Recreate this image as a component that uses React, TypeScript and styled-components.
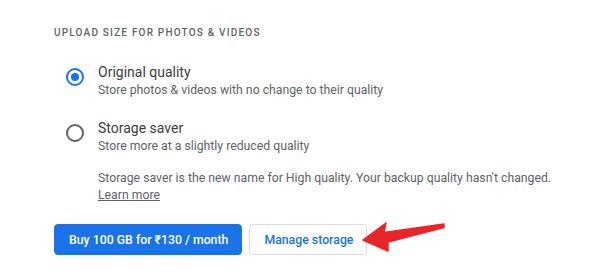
import React, { useState } from 'react';
import styled, { createGlobalStyle } from 'styled-components';

const GlobalStyle = createGlobalStyle`
  body {
    margin: 0;
    background: #ffffff;
    font-family: Roboto, "Liberation Sans", Arial, sans-serif;
  }
`

const Page = styled.div`
  padding: 25px 0 0 54px;
  width: 600px;
  height: 275px;
  box-sizing: border-box;
`
const Heading = styled.div`
  font-size: 10px;
  line-height: 16px;
  font-weight: 500;
  letter-spacing: 1.2px;
  color: #5f6368;
  text-transform: uppercase;
`
const Options = styled.div`
  display: flex;
  flex-direction: column;
  gap: 20px;
  margin-top: 21px;
  padding-left: 12px;
`
const Option = styled.label`
  display: flex;
  gap: 14px;
  cursor: pointer;
`
const Radio = styled.span<{ checked: boolean }>`
  flex: none;
  width: 18px;
  height: 18px;
  margin-top: 6px;
  box-sizing: border-box;
  border-radius: 50%;
  border: 2px solid ${p => (p.checked ? '#1a73e8' : '#5f6368')};
  display: flex;
  align-items: center;
  justify-content: center;
  &::after {
    content: '';
    width: 8px;
    height: 8px;
    border-radius: 50%;
    background: ${p => (p.checked ? '#1a73e8' : 'transparent')};
  }
`
const OptionText = styled.div`
  display: flex;
  flex-direction: column;
`
const Title = styled.div`
  font-size: 14px;
  line-height: 20px;
  color: #3c4043;
`
const Sub = styled.div`
  font-size: 12.25px;
  line-height: 16px;
  color: #5f6368;
`
const Note = styled.div`
  margin: 16px 0 0 44px;
  font-size: 12.25px;
  line-height: 17px;
  color: #5f6368;
`
const LearnMore = styled.a`
  color: #5f6368;
  text-decoration: underline;
`
const ButtonRow = styled.div`
  position: relative;
  display: flex;
  gap: 7px;
  margin-top: 20px;
`
const Button = styled.button<{ primary?: boolean }>`
  height: 31px;
  padding: 0 13px 0 14px;
  box-sizing: border-box;
  border-radius: 4px;
  font-family: Roboto, "Liberation Sans", "DejaVu Sans", sans-serif;
  font-size: 12.3px;
  font-weight: 500;
  cursor: pointer;
  background: ${p => (p.primary ? '#1a73e8' : '#ffffff')};
  color: ${p => (p.primary ? '#ffffff' : '#1a73e8')};
  border: 1px solid ${p => (p.primary ? '#1a73e8' : '#dadce0')};
`
const Arrow = styled.svg`
  position: absolute;
  left: 301px;
  top: -5px;
`

const options = [
  { title: 'Original quality', sub: 'Store photos & videos with no change to their quality' },
  { title: 'Storage saver', sub: 'Store more at a slightly reduced quality' },
]

const App = () => {
  const [selected, setSelected] = useState(0)
  return (
    <Page>
      <GlobalStyle />
      <Heading>Upload size for photos &amp; videos</Heading>
      <Options>
        {options.map((o, i) => (
          <Option key={o.title} onClick={() => setSelected(i)}>
            <Radio checked={selected === i} />
            <OptionText>
              <Title>{o.title}</Title>
              <Sub>{o.sub}</Sub>
            </OptionText>
          </Option>
        ))}
      </Options>
      <Note>
        Storage saver is the new name for High quality. Your backup quality hasn't changed.
        <br />
        <LearnMore href="#">Learn more</LearnMore>
      </Note>
      <ButtonRow>
        <Button primary>Buy 100 GB for ₹130 / month</Button>
        <Button>Manage storage</Button>
        <Arrow width="95" height="35" viewBox="0 0 95 35">
          <polygon
            points="8,21 31,4 29,13.5 89,5 89,8.5 33,23 33,32"
            fill="#e8262a"
            stroke="#e8262a"
            strokeLinejoin="round"
            strokeWidth="1.5"
          />
        </Arrow>
      </ButtonRow>
    </Page>
  )
}

export default App
